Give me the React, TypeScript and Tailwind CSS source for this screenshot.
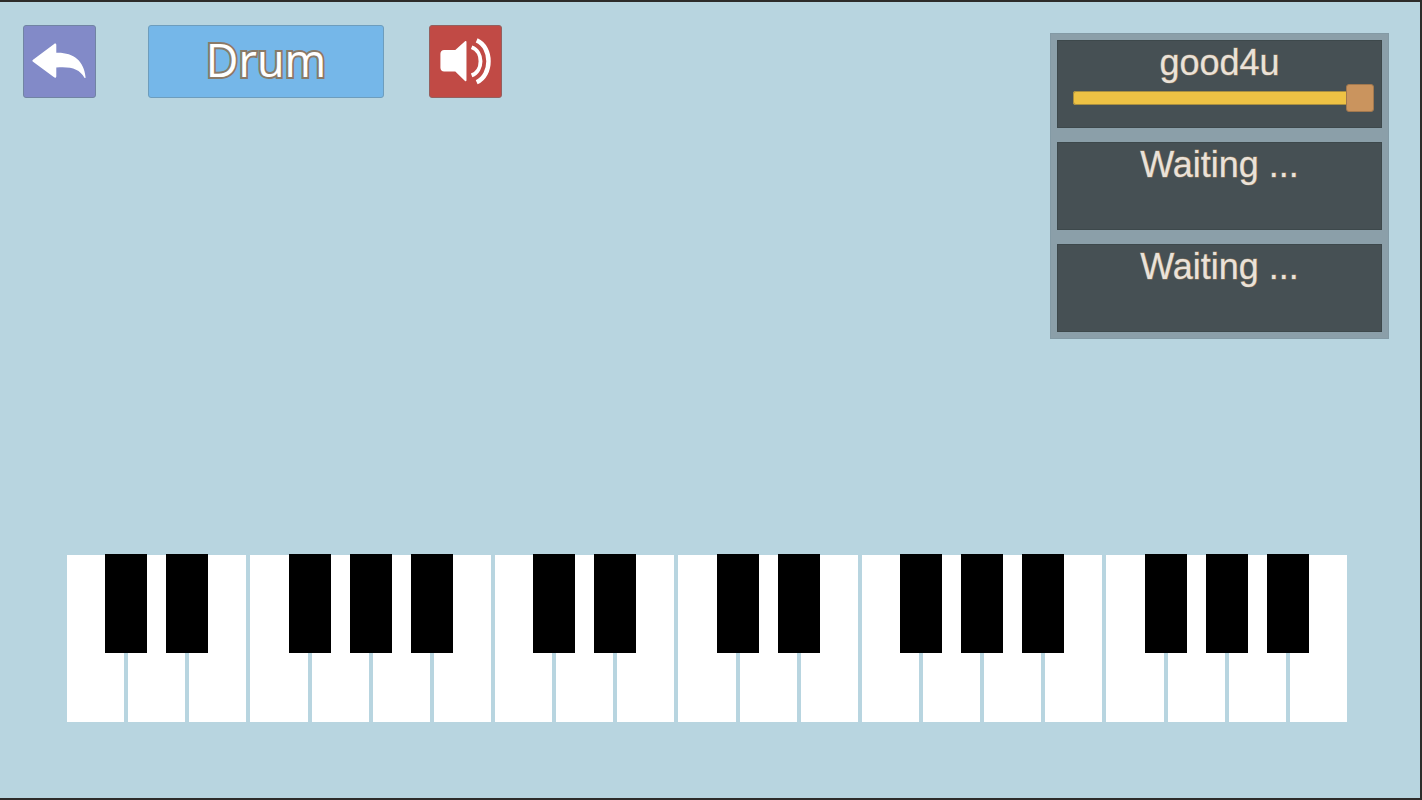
import { useState } from "react";

// white keys that have a black key on their right edge
const sharpIndexes = [0, 1, 3, 4, 5, 7, 8, 10, 11, 13, 14, 15, 17, 18, 19];

const keys = Array.from({ length: 21 }, (_, i) => ({
  id: i + 1,
  sharp: sharpIndexes.includes(i),
}));

const playerSlots = ["good4u", null, null];

function BackIcon() {
  return (
    <svg className="size-full" viewBox="0 0 73 73" aria-hidden>
      <path
        fill="#fff"
        d="M9.300 34.600 31 18.400c1-.8 2.200-.3 2.200 1V27.500c17.500-.6 28.500 8 30.100 25.200.1 1-.9 1.200-1.300.3C57.200 44 48 41.300 33.200 42.600v9c0 1.500-1.200 2-2.300 1.200L9.300 36.800c-.9-.7-.9-1.500 0-2.200Z"
      />
    </svg>
  );
}

function SoundIcon({ muted }: { muted: boolean }) {
  return (
    <svg className="size-full" viewBox="0 0 73 73" aria-hidden>
      <path
        fill="#fff"
        d="M14.500 24.800h11.500L36 15.700c.8-.7 1.500-.4 1.500.6v39.600c0 1-.8 1.300-1.500.6L26 46.800H14.500c-2.200 0-3.800-1.600-3.800-3.800V28.600c0-2.200 1.600-3.800 3.800-3.800Z"
      />
      {!muted && (
        <g fill="none" stroke="#fff" strokeLinecap="butt">
          <path strokeWidth="4" d="M42.800 21.800C55 26.500 55 46 42.800 50.800" />
          <path strokeWidth="4.600" d="M48 14.800C64.200 22 64.200 50.500 48 57.800" />
        </g>
      )}
    </svg>
  );
}

function PlayerCard({ name }: { name: string | null }) {
  const [volume, setVolume] = useState(100);

  return (
    <li className="h-[88px] border border-[#3d484b] bg-[#465054]">
      <p className="text-center text-[36px] leading-[44px] text-[#eae2d9] [-webkit-text-stroke:1px_#8f7a60] [paint-order:stroke_fill]">
        {name ?? "Waiting ..."}
      </p>
      {name && (
        <input
          type="range"
          aria-label={`${name} volume`}
          value={volume}
          onChange={(e) => setVolume(Number(e.target.value))}
          className="ml-[15px] block h-[26px] w-[calc(100%-22px)] appearance-none bg-transparent [&::-webkit-slider-runnable-track]:h-[14px] [&::-webkit-slider-runnable-track]:rounded-[3px] [&::-webkit-slider-runnable-track]:bg-[#eec244] [&::-webkit-slider-runnable-track]:shadow-[inset_0_0_0_1px_#a98f41] [&::-webkit-slider-thumb]:-mt-[7px] [&::-webkit-slider-thumb]:size-7 [&::-webkit-slider-thumb]:appearance-none [&::-webkit-slider-thumb]:rounded-[3px] [&::-webkit-slider-thumb]:border [&::-webkit-slider-thumb]:border-[#a1784f] [&::-webkit-slider-thumb]:bg-[#ca945e]"
        />
      )}
    </li>
  );
}

function Piano() {
  return (
    <div className="flex h-[167px] gap-1">
      {keys.map((key) => (
        <div key={key.id} className="relative flex-1">
          <button type="button" aria-label={`White key ${key.id}`} className="block size-full bg-white" />
          {key.sharp && (
            <button
              type="button"
              aria-label={`Black key ${key.id}`}
              className="absolute -top-px -right-[23px] z-10 h-[99px] w-[42px] bg-black"
            />
          )}
        </div>
      ))}
    </div>
  );
}

export default function App() {
  const [muted, setMuted] = useState(false);

  return (
    <main className="flex min-h-screen flex-col justify-between border-y-2 border-r-2 border-[#2d2c2a] bg-[#b8d5e0] font-['Liberation_Sans',sans-serif]">
      <header className="flex items-start justify-between pt-[23px] pr-[31px] pl-[23px]">
        <div className="flex gap-[45px]">
          <div className="flex gap-[52px]">
            <button
              type="button"
              aria-label="Back"
              className="size-[73px] rounded-[3px] border border-[#7184a3] bg-[#828ac8]"
            >
              <BackIcon />
            </button>
            <button
              type="button"
              className="h-[73px] w-[236px] rounded-[3px] border border-[#6d9dbd] bg-[#75b7e9] pb-1 font-['Open_Sans',sans-serif] text-[45px] leading-none font-medium text-white [-webkit-text-stroke:4px_#8a7a68] [paint-order:stroke_fill]"
            >
              Drum
            </button>
          </div>
          <button
            type="button"
            aria-label="Sound"
            aria-pressed={!muted}
            onClick={() => setMuted((v) => !v)}
            className="size-[73px] rounded-[3px] border border-[#94605f] bg-[#c14a45]"
          >
            <SoundIcon muted={muted} />
          </button>
        </div>

        <ul className="mt-2 flex w-[339px] flex-col gap-[14px] border border-[#839aa5] bg-[#8b9fa9] p-[6px]">
          {playerSlots.map((name, i) => (
            <PlayerCard key={i} name={name} />
          ))}
        </ul>
      </header>

      <section aria-label="Piano" className="pr-[73px] pb-[76px] pl-[67px]">
        <Piano />
      </section>
    </main>
  );
}
